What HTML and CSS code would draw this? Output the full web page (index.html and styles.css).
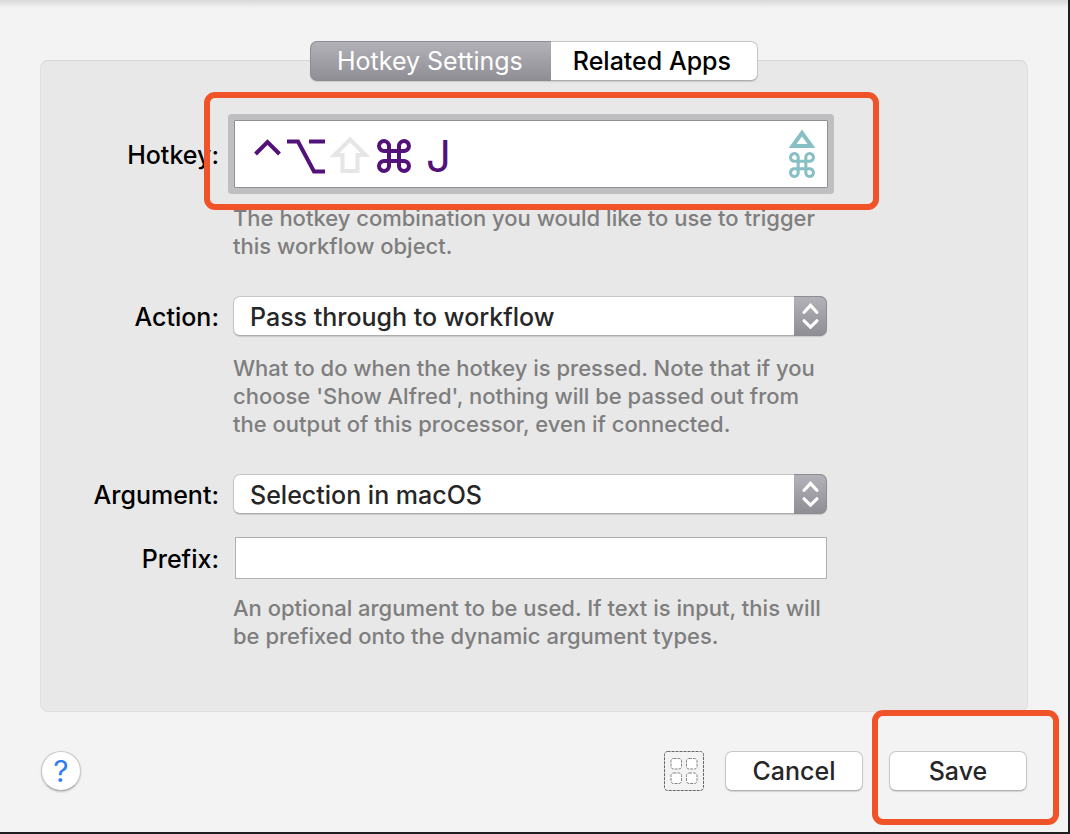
FILE: index.html
```
<!DOCTYPE html>
<html lang="en">
<head>
<meta charset="utf-8">
<meta name="viewport" content="width=device-width, initial-scale=1">
<title>Hotkey Settings</title>
<link rel="stylesheet" href="styles.css">
</head>
<body>
<svg class="sprite" aria-hidden="true">
  <symbol id="command" viewBox="0 0 34 34">
    <path d="M12 12H7.500A5 5 0 1 1 12 7.500V26.500A5 5 0 1 1 7.500 22H26.500A5 5 0 1 1 22 26.500V7.500A5 5 0 1 1 26.500 12Z"/>
  </symbol>
  <symbol id="chevrons" viewBox="0 0 16 24">
    <path d="M2 8.500L8 2L14 8.500M2 16.500L8 22.500L14 16.500"/>
  </symbol>
</svg>
<main class="window">
  <nav class="tabs" role="tablist">
    <button class="tab tab-active" type="button" role="tab" aria-selected="true">Hotkey Settings</button>
    <button class="tab" type="button" role="tab" aria-selected="false">Related Apps</button>
  </nav>
  <form class="sheet">
    <section class="panel">
      <label class="label" for="hotkey">Hotkey:</label>
      <div class="hotkey-field">
        <svg class="key" width="120" height="38" viewBox="0 0 120 38" aria-label="Control Option Shift">
          <g class="key-on">
            <path d="M2.500 17L14.500 5L26.500 17"/>
            <path d="M34 4.500H45L61 34.500H72M56 4.500H72"/>
          </g>
          <path class="key-off" d="M97 2.500L112.500 18H104.500V34H89.500V18H81.500Z"/>
        </svg>
        <svg class="key key-command" width="34" height="34" aria-label="Command"><use href="#command"/></svg>
        <input class="hotkey-input" id="hotkey" type="text" value="J" readonly>
        <span class="badges">
          <svg width="26" height="20" viewBox="0 0 26 20" aria-hidden="true"><path d="M13 4L22.500 17H3.500Z"/></svg>
          <svg width="26" height="26" aria-hidden="true"><use href="#command"/></svg>
        </span>
        <span class="marker marker-hotkey"></span>
      </div>
      <p class="hint">The hotkey combination you would like to use to trigger<br>this workflow object.</p>

      <label class="label" for="action">Action:</label>
      <div class="select-box">
        <select class="select" id="action"><option>Pass through to workflow</option></select>
        <span class="stepper"><svg width="17" height="26"><use href="#chevrons"/></svg></span>
      </div>
      <p class="hint hint-action">What to do when the hotkey is pressed. Note that if you<br>choose 'Show Alfred', nothing will be passed out from<br>the output of this processor, even if connected.</p>

      <label class="label" for="argument">Argument:</label>
      <div class="select-box">
        <select class="select" id="argument"><option>Selection in macOS</option></select>
        <span class="stepper"><svg width="17" height="26"><use href="#chevrons"/></svg></span>
      </div>
      <label class="label label-prefix" for="prefix">Prefix:</label>
      <input class="prefix" id="prefix" type="text">
      <p class="hint hint-prefix">An optional argument to be used. If text is input, this will<br>be prefixed onto the dynamic argument types.</p>
    </section>
    <footer class="footer">
      <button class="help" type="button" aria-label="Help">?</button>
      <button class="grid-button" type="button" aria-label="Layout">
        <svg width="40" height="40" viewBox="0 0 40 40" aria-hidden="true">
          <rect class="grid-frame" x="0.500" y="0.500" width="39" height="39" rx="3"/>
          <g class="grid-cells">
            <rect x="7" y="7.500" width="10.500" height="10.500" rx="2.500"/>
            <rect x="22.500" y="7.500" width="10.500" height="10.500" rx="2.500"/>
            <rect x="7" y="22" width="10.500" height="10.500" rx="2.500"/>
            <rect x="22.500" y="22" width="10.500" height="10.500" rx="2.500"/>
          </g>
        </svg>
      </button>
      <button class="button" type="button">Cancel</button>
      <div class="save">
        <button class="button" type="submit">Save</button>
        <span class="marker marker-save"></span>
      </div>
    </footer>
  </form>
</main>
</body>
</html>
```
FILE: styles.css
```
* {
  box-sizing: border-box;
}

body {
  margin: 0;
  font-family: Inter, "Liberation Sans", sans-serif;
  font-size: 25px;
  font-weight: 500;
  color: #000;
}

button,
input,
select {
  margin: 0;
  font: inherit;
}

.sprite {
  position: absolute;
  width: 0;
  height: 0;
}

.window {
  min-height: 100vh;
  padding: 41px 40px 40px;
  border-right: 2px solid #1e1e21;
  border-bottom: 2px solid #1e1e21;
  background: linear-gradient(#d8d8d8, #f3f3f3 8px);
}

.tabs {
  position: relative;
  display: flex;
  justify-content: center;
  margin: 0 0 -21px;
}

.tab {
  height: 40px;
  padding: 0 26px 0 22px;
  border: 1px solid #c6c6c6;
  border-bottom-color: #adadad;
  border-left: 0;
  border-radius: 0 7px 7px 0;
  background: #fff;
  line-height: 38px;
  box-shadow: 0 1px 1px #0002;
}

.tab-active {
  padding: 0 28px 0 26px;
  border: 1px solid #8d8c92;
  border-right: 0;
  border-radius: 7px 0 0 7px;
  background: linear-gradient(#b3b2b8, #8f8e94);
  color: #fff;
  font-weight: 400;
}

.panel {
  display: grid;
  grid-template-columns: 178px minmax(0, 1fr);
  column-gap: 14px;
  align-items: center;
  padding: 59px 200px 61px 0;
  border: 1px solid #e0e0e0;
  border-top-color: #d6d6d6;
  border-radius: 8px;
  background: #e8e8e8;
}

.label {
  padding-top: 2px;
  text-align: right;
  line-height: 38px;
}

.hotkey-field {
  position: relative;
  display: flex;
  align-items: center;
  height: 68px;
  margin: 0 -1px 0 1px;
  padding: 4px 12px 0 18px;
  border: 1px solid #8f8f92;
  border-radius: 1px;
  background: #fff;
  box-shadow: 0 0 0 6px #bfbfc1;
}

.key {
  flex: none;
  fill: none;
  stroke-width: 4;
}

.key-on,
.key-command {
  stroke: #521279;
}

.key-off {
  stroke: #e6e6e6;
}

.key-command {
  margin-left: 4px;
}

.hotkey-input {
  flex: 1;
  min-width: 0;
  padding: 0 0 0 15px;
  border: 0;
  outline: 0;
  background: none;
  color: #521279;
  font-size: 44px;
  font-weight: 400;
}

.badges {
  display: grid;
  gap: 3px;
  margin-bottom: 6px;
  fill: none;
  stroke: #88bfc4;
  stroke-width: 4;
}

.marker {
  position: absolute;
  border: 6px solid #f05328;
  border-radius: 11px;
  pointer-events: none;
}

.marker-hotkey {
  inset: -29px -52px -23px -31px;
}

.hint {
  grid-column: 2;
  margin: 16px 0 36px;
  color: #7e7e7e;
  font-size: 22px;
  line-height: 28px;
  white-space: nowrap;
}

.hint-action {
  margin: 18px 0 36px;
}

.select-box {
  display: flex;
  height: 40px;
  border: 1px solid #c5c5c5;
  border-bottom-color: #acacac;
  border-radius: 7px;
  background: #fff;
  box-shadow: 0 1px 1px #0002;
}

.select {
  flex: 1;
  min-width: 0;
  padding: 2px 16px 0;
  border: 0;
  outline: 0;
  appearance: none;
  background: none;
  color: #262626;
}

.stepper {
  display: grid;
  place-items: center;
  width: 33px;
  margin: -1px;
  border: 1px solid #8d8c92;
  border-left: 0;
  border-radius: 0 7px 7px 0;
  background: linear-gradient(#b3b2b8, #8f8e94);
  fill: none;
  stroke: #fff;
  stroke-width: 3;
  stroke-linecap: round;
}

.label-prefix {
  margin-top: 23px;
}

.prefix {
  height: 42px;
  margin: 23px 0 0 2px;
  padding: 0 8px;
  border: 1px solid #b0b0b0;
  background: #fff;
}

.hint-prefix {
  margin: 15px 0 0;
}

.footer {
  display: flex;
  align-items: center;
  padding: 39px 1px 0;
}

.help {
  width: 40px;
  height: 40px;
  margin-right: auto;
  padding: 0;
  border: 1px solid #c8c8c8;
  border-bottom-color: #b0b0b0;
  border-radius: 50%;
  background: #fff;
  color: #2f7cf6;
  font-size: 30px;
  font-weight: 400;
  line-height: 38px;
  box-shadow: 0 1px 2px #0003;
}

.grid-button {
  display: grid;
  width: 40px;
  height: 40px;
  margin-right: 21px;
  padding: 0;
  border: 0;
  background: none;
  fill: none;
}

.grid-frame {
  stroke: #666;
  stroke-dasharray: 3 1;
}

.grid-cells {
  fill: #fff;
  stroke: #858585;
  stroke-dasharray: 3 1;
}

.button {
  width: 138px;
  height: 40px;
  padding: 0;
  border: 1px solid #c8c8c8;
  border-bottom-color: #b0b0b0;
  border-radius: 7px;
  background: #fff;
  color: #262626;
  line-height: 38px;
  box-shadow: 0 1px 1px #0002;
}

.save {
  position: relative;
  display: flex;
  margin-left: 26px;
}

.marker-save {
  inset: -41px -32px -34px -17px;
}
```
